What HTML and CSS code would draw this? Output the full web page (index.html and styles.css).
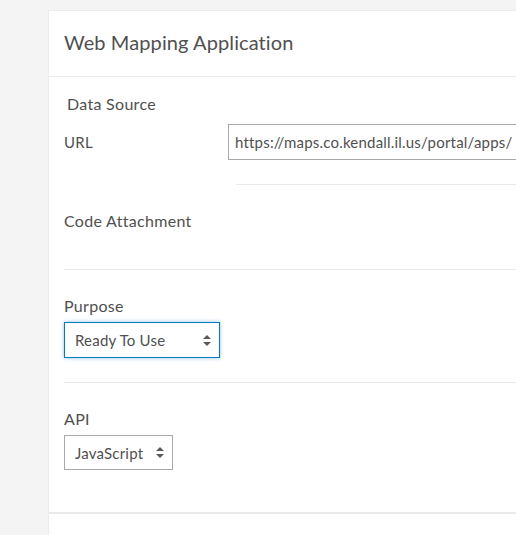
FILE: index.html
```html
<!DOCTYPE html>
<html>
<head>
<meta charset="utf-8">
<link rel="stylesheet" href="styles.css">
</head>
<body>
<div class="page">
  <div class="card">
    <div class="card-header">
      <h1 class="title">Web Mapping Application</h1>
    </div>
    <div class="section section-source">
      <div class="section-label source-label">Data Source</div>
      <div class="field-row">
        <div class="field-label">URL</div>
        <div class="text-input">https://maps.co.kendall.il.us/portal/apps/</div>
      </div>
      <div class="divider divider-indent"></div>
    </div>
    <div class="section section-code">
      <div class="section-label">Code Attachment</div>
    </div>
    <div class="divider"></div>
    <div class="section">
      <div class="section-label">Purpose</div>
      <div class="select select-focused select-purpose">
        <span class="select-text">Ready To Use</span>
        <svg class="select-arrows" width="8" height="11" viewBox="0 0 8 11"><path d="M4 0 L8 4 L0 4 Z M0 7 L8 7 L4 11 Z" fill="#5a5a5a"/></svg>
      </div>
    </div>
    <div class="divider"></div>
    <div class="section section-api">
      <div class="section-label">API</div>
      <div class="select select-api">
        <span class="select-text">JavaScript</span>
        <svg class="select-arrows" width="8" height="11" viewBox="0 0 8 11"><path d="M4 0 L8 4 L0 4 Z M0 7 L8 7 L4 11 Z" fill="#5a5a5a"/></svg>
      </div>
    </div>
    <div class="card-footer"></div>
  </div>
</div>
</body>
</html>
```

FILE: styles.css
```css
html, body {
  margin: 0;
  padding: 0;
  background: #f4f4f4;
  overflow: hidden;
  width: 516px;
  height: 535px;
}
.page {
  padding: 10px 0 0 48px;
  font-family: Lato, "Noto Sans", sans-serif;
  color: #505050;
}
.card {
  background: #fff;
  border-left: 1px solid #ececec;
  border-top: 1px solid #ececec;
  height: 524px;
  overflow: hidden;
}
.card-header {
  height: 65px;
  border-bottom: 1px solid #eaeaea;
  display: flex;
  align-items: center;
  padding-left: 15px;
}
.title {
  margin: 0;
  font-size: 20px;
  font-weight: 400;
  line-height: 24px;
  padding-bottom: 3px;
  letter-spacing: 0.1px;
}
.section {
  padding: 26px 0 24px 15px;
}
.section-source {
  padding: 17px 0 0 15px;
}
.section-code {
  padding-bottom: 32px;
}
.section-api {
  padding-bottom: 42px;
}
.section-label {
  font-size: 16px;
  line-height: 20px;
  margin-bottom: 6px;
  letter-spacing: 0.3px;
}
.source-label {
  padding-left: 3px;
  margin-bottom: 10px;
}
.field-row {
  display: flex;
  align-items: center;
}
.field-label {
  width: 164px;
  flex: none;
  font-size: 15px;
  line-height: 20px;
  letter-spacing: 0.3px;
}
.text-input {
  flex: none;
  width: 500px;
  height: 34px;
  border: 1px solid #a9a9a9;
  padding: 0 6px;
  font-size: 15px;
  line-height: 34px;
  letter-spacing: 0.2px;
  white-space: nowrap;
}
.divider {
  height: 1px;
  background: #eaeaea;
  margin-left: 15px;
}
.divider-indent {
  margin-left: 172px;
  margin-top: 24px;
}
.select {
  display: flex;
  align-items: center;
  justify-content: space-between;
  height: 34px;
  border: 1px solid #a9a9a9;
  padding: 0 8px 0 10px;
  font-size: 15px;
  letter-spacing: 0.2px;
}
.select-focused {
  border-color: #0079c1;
  box-shadow: 0 0 4px rgba(0, 121, 193, 0.45);
}
.select-purpose {
  width: 136px;
}
.select-api {
  width: 89px;
  height: 33px;
}
.select-arrows {
  display: block;
}
.card-footer {
  height: 2px;
  background: #eaeaea;
}
```
